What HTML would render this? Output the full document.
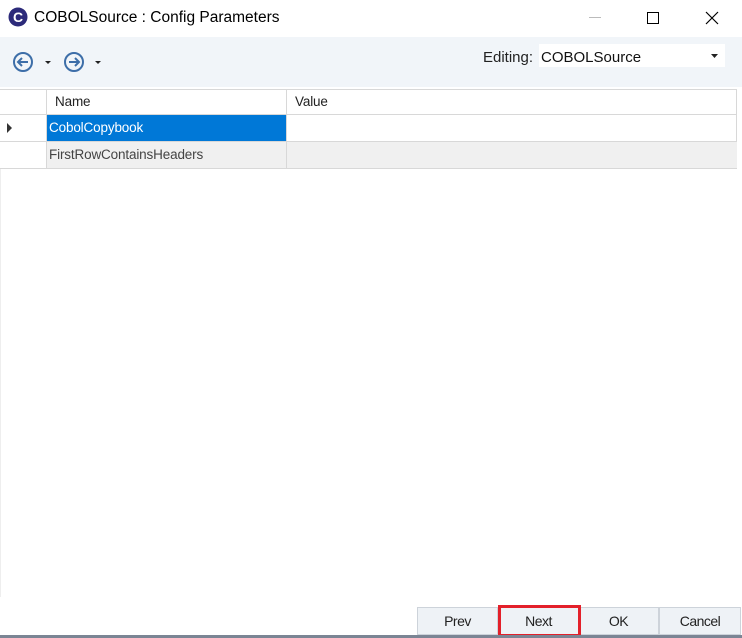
<!DOCTYPE html>
<html><head><meta charset="utf-8"><style>
*{margin:0;padding:0;box-sizing:border-box}
body{width:742px;height:638px;position:relative;background:#fff;font-family:"Segoe UI","Liberation Sans",sans-serif;overflow:hidden}
.abs{position:absolute}
.title{left:34px;top:9px;font-size:15.5px;color:#000}
.tb{left:0;top:37px;width:742px;height:50px;background:#f1f5f9}
.cell{position:absolute;font-size:13.5px;color:#222;padding-left:8px;line-height:26px;letter-spacing:-0.15px}
.btn{position:absolute;top:607px;height:28px;background:#eef2f6;border:1px solid #cdd3da;font-size:14px;text-align:center;line-height:26px;color:#222;letter-spacing:-0.5px}
</style></head><body>
<svg class="abs" style="left:8px;top:7px" width="20" height="20"><circle cx="10" cy="10" r="9.5" fill="#2c2a7a"/><text x="10" y="15" font-size="14" font-weight="bold" fill="#fff" text-anchor="middle" font-family="Liberation Sans">C</text></svg>
<div class="abs title">COBOLSource : Config Parameters</div>
<div class="abs" style="left:589px;top:17px;width:12px;height:1px;background:#bbb"></div>
<div class="abs" style="left:647px;top:12px;width:12px;height:12px;border:1px solid #000"></div>
<svg class="abs" style="left:705px;top:11px" width="14" height="14"><path d="M1 1L13 13M13 1L1 13" stroke="#000" stroke-width="1.2"/></svg>
<div class="abs tb"></div>
<svg class="abs" style="left:12px;top:51px" width="100" height="22">
<circle cx="11" cy="11" r="9" fill="none" stroke="#3d6ea8" stroke-width="2"/><path d="M16 11H6M10 7L6 11L10 15" fill="none" stroke="#3d6ea8" stroke-width="2"/>
<path d="M33 10h6l-3 3z" fill="#222"/>
<circle cx="62" cy="11" r="9" fill="none" stroke="#3d6ea8" stroke-width="2"/><path d="M57 11H67M63 7L67 11L63 15" fill="none" stroke="#3d6ea8" stroke-width="2"/>
<path d="M83 10h6l-3 3z" fill="#222"/>
</svg>
<div class="abs" style="left:483px;top:49px;font-size:15px;color:#222">Editing:</div>
<div class="abs" style="left:539px;top:44px;width:186px;height:23px;background:#fff"></div>
<div class="abs" style="left:541px;top:49px;font-size:15px;color:#111">COBOLSource</div>
<svg class="abs" style="left:711px;top:54px" width="8" height="5"><path d="M0 0h7l-3.5 4z" fill="#222"/></svg>
<!-- grid -->
<div class="abs" style="left:0;top:89px;width:737px;height:80px;border:1px solid #d8d8d8;border-left:none"></div>
<div class="abs" style="left:46px;top:89px;width:1px;height:80px;background:#d8d8d8"></div>
<div class="abs" style="left:286px;top:89px;width:1px;height:80px;background:#d8d8d8"></div>
<div class="abs" style="left:0;top:114px;width:737px;height:1px;background:#d8d8d8"></div>
<div class="abs" style="left:0;top:141px;width:737px;height:1px;background:#d8d8d8"></div>
<div class="cell" style="left:47px;top:89px;line-height:25px">Name</div>
<div class="cell" style="left:287px;top:89px;line-height:25px">Value</div>
<div class="abs" style="left:47px;top:115px;width:239px;height:26px;background:#0078d7"></div>
<div class="cell" style="left:41px;top:115px;color:#fff">CobolCopybook</div>
<svg class="abs" style="left:7px;top:123px" width="6" height="10"><path d="M0 0L5 5L0 10z" fill="#333"/></svg>
<div class="abs" style="left:47px;top:142px;width:690px;height:26px;background:#f0f0f0"></div>
<div class="abs" style="left:286px;top:142px;width:1px;height:26px;background:#d8d8d8"></div>
<div class="cell" style="left:41px;top:142px;color:#444">FirstRowContainsHeaders</div>
<div class="abs" style="left:0;top:169px;width:1px;height:428px;background:#eee"></div>
<div class="btn" style="left:417px;width:81px">Prev</div>
<div class="btn" style="left:498px;width:81px">Next</div>
<div class="btn" style="left:578px;width:81px">OK</div>
<div class="btn" style="left:659px;width:82px">Cancel</div>
<div class="abs" style="left:498px;top:605px;width:83px;height:32px;border:3px solid #e3202a"></div>
<div class="abs" style="left:0;top:635px;width:742px;height:3px;background:#7b8594"></div>
</body></html>
